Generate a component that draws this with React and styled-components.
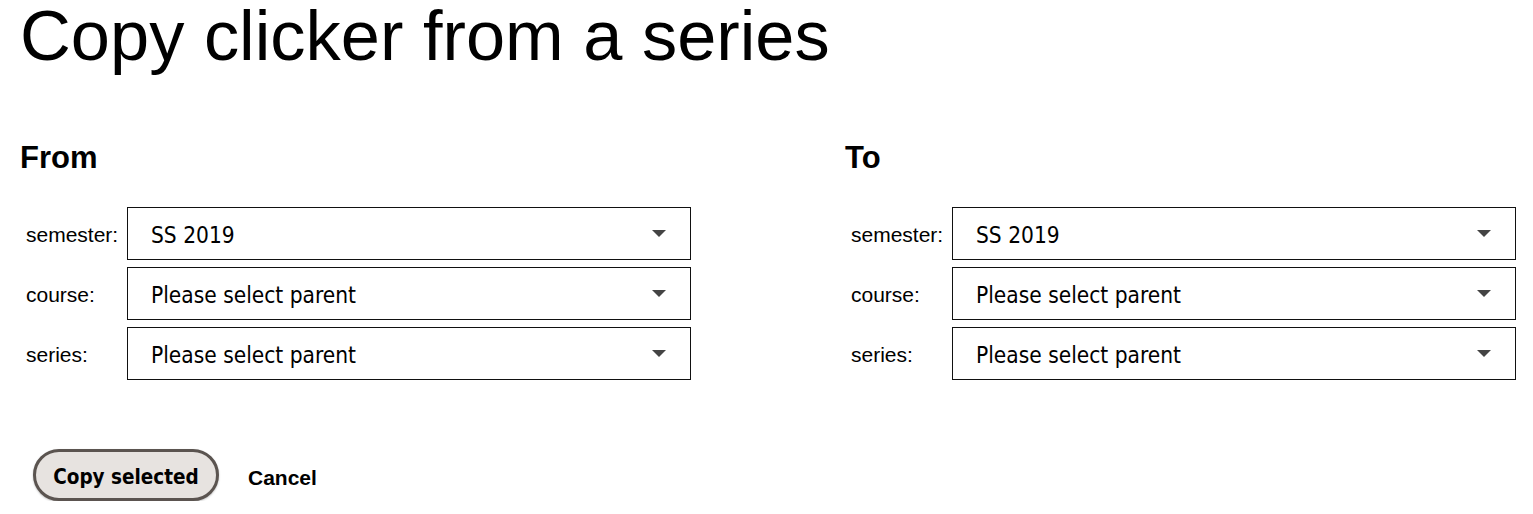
import React from 'react';
import styled, { createGlobalStyle } from 'styled-components';

const GlobalStyle = createGlobalStyle`
  body {
    margin: 0;
    background: #fff;
    font-family: "Liberation Sans", Arial, sans-serif;
    color: #000;
  }
`;

const Page = styled.div`
  padding: 0 20px;
`;

const Title = styled.h1`
  margin: 0;
  padding-top: 1px;
  font-size: 70.4px;
  line-height: 1;
  font-weight: 400;
`;

const Columns = styled.div`
  display: flex;
  margin-top: 71px;
`;

const Column = styled.div`
  flex: ${(p) => (p.$first ? '0 0 825px' : '1 1 auto')};
`;

const Heading = styled.h2`
  margin: 0;
  font-size: 31px;
  line-height: 1;
  font-weight: 700;
`;

const Fields = styled.div`
  display: grid;
  grid-template-columns: 107px 564px;
  row-gap: 7px;
  margin-top: 34px;
  align-items: center;
`;

const Label = styled.label`
  padding: 3px 0 0 6px;
  font-size: 21px;
`;

const SelectBox = styled.div`
  height: 53px;
  box-sizing: border-box;
  border: 1px solid #111;
  display: flex;
  align-items: center;
  justify-content: space-between;
  padding: 2px 24px 0 23px;
  font-family: "DejaVu Sans Condensed", "DejaVu Sans", Verdana, sans-serif;
  font-size: 22.5px;
  cursor: pointer;

  svg {
    margin-top: -3px;
  }
`;

const Arrow = () => (
  <svg width="14" height="7" viewBox="0 0 14 7">
    <path d="M0 0 H14 L7 7 Z" fill="#444" />
  </svg>
);

const Actions = styled.div`
  display: flex;
  align-items: center;
  gap: 29px;
  margin-top: 69px;
  padding-left: 13px;
`;

const PillButton = styled.button`
  width: 186px;
  height: 52px;
  padding: 4px 0 0;
  border: 3px solid #5b5450;
  border-radius: 26px;
  background: #e7e3e0;
  box-shadow: 0 1px 2px rgba(0, 0, 0, 0.25);
  font-family: "DejaVu Sans Condensed", "DejaVu Sans", sans-serif;
  font-weight: 700;
  font-size: 20.5px;
  color: #000;
  cursor: pointer;
`;

const TextButton = styled.button`
  border: none;
  background: none;
  padding: 6px 0 0;
  font-family: "Liberation Sans", Arial, sans-serif;
  font-weight: 700;
  font-size: 21px;
  color: #000;
  cursor: pointer;
`;

const fields = [
  { label: 'semester:', value: 'SS 2019' },
  { label: 'course:', value: 'Please select parent' },
  { label: 'series:', value: 'Please select parent' },
];

const Picker = ({ title, first }) => (
  <Column $first={first}>
    <Heading>{title}</Heading>
    <Fields>
      {fields.map((f) => (
        <React.Fragment key={f.label}>
          <Label>{f.label}</Label>
          <SelectBox>
            <span>{f.value}</span>
            <Arrow />
          </SelectBox>
        </React.Fragment>
      ))}
    </Fields>
  </Column>
);

const App = () => (
  <Page>
    <GlobalStyle />
    <Title>Copy clicker from a series</Title>
    <Columns>
      <Picker title="From" first />
      <Picker title="To" />
    </Columns>
    <Actions>
      <PillButton>Copy selected</PillButton>
      <TextButton>Cancel</TextButton>
    </Actions>
  </Page>
);

export default App;
